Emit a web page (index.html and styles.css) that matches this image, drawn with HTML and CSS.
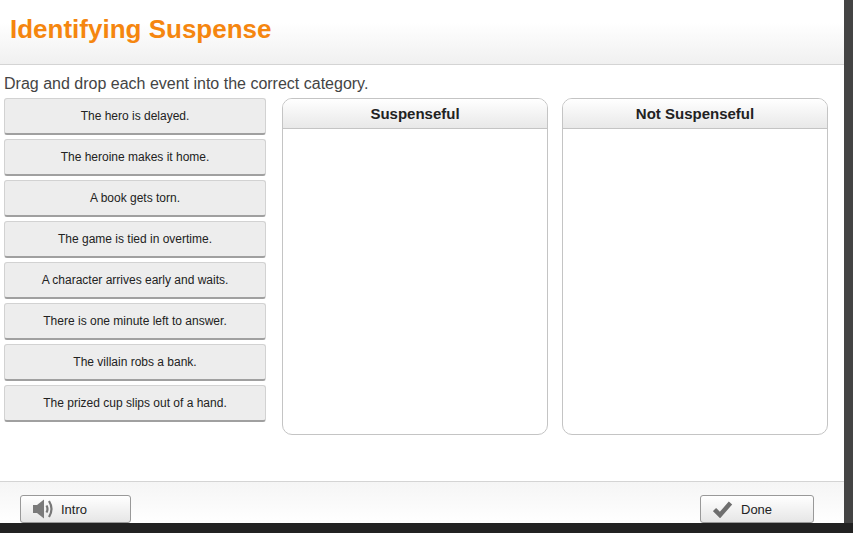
FILE: index.html
```html
<!DOCTYPE html>
<html lang="en">
<head>
    <meta charset="UTF-8">
    <title>Identifying Suspense</title>
    <link rel="stylesheet" href="styles.css">
</head>
<body>
    <div class="frame">
        <div class="lesson">
            <header class="top-bar">
                <h1>Identifying Suspense</h1>
            </header>

            <main class="activity">
                <p class="prompt">Drag and drop each event into the correct category.</p>
                <div class="board">
                    <div class="events">
                        <div class="event">The hero is delayed.</div>
                        <div class="event">The heroine makes it home.</div>
                        <div class="event">A book gets torn.</div>
                        <div class="event">The game is tied in overtime.</div>
                        <div class="event">A character arrives early and waits.</div>
                        <div class="event">There is one minute left to answer.</div>
                        <div class="event">The villain robs a bank.</div>
                        <div class="event">The prized cup slips out of a hand.</div>
                    </div>
                    <section class="category">
                        <h2>Suspenseful</h2>
                    </section>
                    <section class="category">
                        <h2>Not Suspenseful</h2>
                    </section>
                </div>
            </main>

            <footer class="bottom-bar">
                <button class="btn btn-intro">
                    <svg width="21" height="20" viewBox="0 0 21 20">
                        <path d="M0 6h4L11 .5v19L4 14H0z" fill="#7a7a7a"/>
                        <path d="M13.500 6.500q2 3.500 0 7" fill="none" stroke="#777" stroke-width="2.200"/>
                        <path d="M16 2q5 8 0 16" fill="none" stroke="#777" stroke-width="2.200"/>
                    </svg>
                    Intro
                </button>
                <button class="btn btn-done">
                    <svg width="20" height="17" viewBox="0 0 20 17">
                        <path d="M1.500 8.500l5.500 5.500L17.500 2" fill="none" stroke="#6e6e6e" stroke-width="4.500"/>
                    </svg>
                    Done
                </button>
            </footer>
        </div>
    </div>
</body>
</html>
```

FILE: styles.css
```css
html, body {
    margin: 0;
    height: 100%;
    overflow: hidden;
}

body {
    background-color: #222;
    font-family: "Liberation Sans", Arial, sans-serif;
    color: #222;
}

.frame {
    height: 523px;
    width: 853px;
    background-color: #444;
}

.lesson {
    width: 844px;
    height: 523px;
    background-color: white;
    display: flex;
    flex-direction: column;
}

.top-bar {
    height: 64px;
    flex-shrink: 0;
    border-bottom: 1px solid #d4d4d4;
    background: linear-gradient(to bottom, #fff 0%, #fff 35%, #f0f0f0 100%);
}

h1 {
    margin: 0;
    padding: 14px 0 0 10px;
    font-size: 26px;
    line-height: 30px;
    font-weight: bold;
    color: #f5860f;
}

.activity {
    flex: 1;
    padding: 0 0 0 4px;
}

.prompt {
    margin: 0;
    height: 33px;
    line-height: 37px;
    font-size: 16px;
    color: #444;
}

.board {
    display: flex;
    align-items: flex-start;
}

.events {
    width: 262px;
    margin-right: 16px;
    display: flex;
    flex-direction: column;
    gap: 4px;
}

.event {
    box-sizing: border-box;
    height: 37px;
    background-color: #ededed;
    border: 1px solid #d2d2d2;
    border-bottom: 2px solid #a0a0a0;
    border-radius: 3px;
    font-size: 12px;
    line-height: 34px;
    text-align: center;
}

.category {
    box-sizing: border-box;
    width: 266px;
    height: 337px;
    margin-right: 14px;
    border: 1px solid #c4c4c4;
    border-radius: 10px;
    overflow: hidden;
}

h2 {
    margin: 0;
    height: 29px;
    border-bottom: 1px solid #c4c4c4;
    background: linear-gradient(to bottom, #fff, #e8e8e8);
    font-size: 15px;
    line-height: 30px;
    font-weight: bold;
    text-align: center;
    color: #222;
}

.bottom-bar {
    height: 41px;
    flex-shrink: 0;
    border-top: 1px solid #d4d4d4;
    background: linear-gradient(to bottom, #f5f5f5, #fff);
    display: flex;
    justify-content: space-between;
    align-items: flex-end;
    padding: 0 30px 0 20px;
}

.btn {
    box-sizing: border-box;
    height: 28px;
    display: flex;
    align-items: center;
    border: 1px solid #999;
    border-radius: 3px;
    background: linear-gradient(to bottom, #fff, #e6e6e6);
    font-family: "Liberation Sans", Arial, sans-serif;
    font-size: 13px;
    color: #222;
    padding: 0;
}

.btn-intro {
    width: 111px;
    padding-left: 12px;
    gap: 7px;
}

.btn-done {
    width: 114px;
    padding-left: 12px;
    gap: 8px;
}
```
